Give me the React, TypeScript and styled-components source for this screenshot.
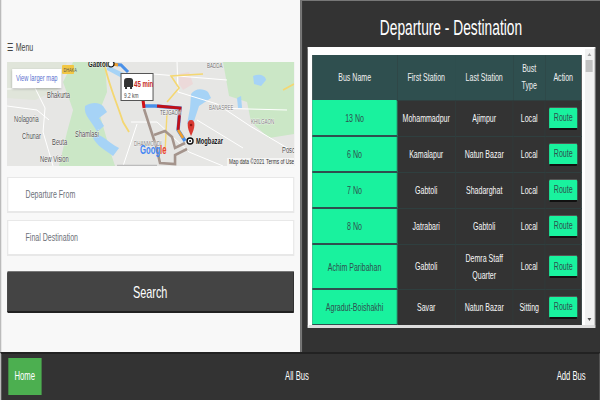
import React from "react";
import styled, { createGlobalStyle } from "styled-components";

/* The reference is a wide page squeezed horizontally, so the page is laid out
   wider and squeezed the same way. w() turns a picture width into a layout width. */
const SQUEEZE = 0.64;
const w = (n: number) => `${n / SQUEEZE}px`;

const Global = createGlobalStyle`
  html, body { margin: 0; padding: 0; width: 600px; height: 400px; overflow: hidden; background: #fff; }
  * { box-sizing: border-box; }
  body { font-family: "Liberation Sans", Arial, sans-serif; }
`;

const Page = styled.div`
  width: ${w(600)}; height: 400px; display: flex; flex-direction: column;
  transform: scaleX(${SQUEEZE}); transform-origin: 0 0;
`;
const Top = styled.div`
  height: 352px; display: flex;
`;
const Left = styled.section`
  width: ${w(300)}; background: #f8f8f8; border-left: 2px solid #bbb; padding: 41px ${w(6)} 0 ${w(6)};
  display: flex; flex-direction: column;
`;
const MenuLine = styled.div`
  font-size: 11px; line-height: 12px; color: #444; height: 21px;
`;
const MapBox = styled.div`
  position: relative; width: ${w(287)}; height: 104px; overflow: hidden; background: #e8e8e8;
`;
const MapSvg = styled.svg`
  display: block; width: 100%; height: 104px; font-family: "Liberation Sans", sans-serif;
`;
const LargerLink = styled.div`
  position: absolute; left: ${w(5)}; top: 7px; width: ${w(49)}; height: 19px; background: #fff;
  box-shadow: 0 1px 3px rgba(0,0,0,.25); color: #5a6fd0; font-size: 9px; line-height: 19px; text-align: center;
`;
const Field = styled.div<{ $mt: number }>`
  margin-top: ${(p) => p.$mt}px; width: ${w(287)}; height: 36px; background: #fff; border: 1px solid #e8e8e8;
  border-left-width: 2px; border-right-width: 2px; border-bottom-width: 2px; padding-left: ${w(17)};
  font-size: 11px; line-height: 32px; color: #6c7078;
`;
const SearchButton = styled.button`
  margin-top: 15px; width: ${w(287)}; height: 42px; background: #444; color: #fff; border: 0; border-top: 1px solid #777;
  border-bottom: 2px solid #222; border-right: 2px solid #222; border-radius: 2px; font: inherit; font-size: 17px;
  padding: 2px 0 0;
`;
const Right = styled.section`
  width: ${w(300)}; background: #333; border-top: 1px solid #777; border-left: 3px solid #777;
  padding: 0 ${w(6)} 0 ${w(6)}; display: flex; flex-direction: column;
`;
const Title = styled.h1`
  margin: 0; height: 46px; padding-top: 15px; text-align: center; color: #fff; font-weight: 400; font-size: 21.5px; line-height: 24px;
`;
const Frame = styled.div`
  position: relative; width: ${w(287)}; height: 281px; background: #fff; border: 2px solid #fff; border-bottom: 3px solid #ddd;
  border-right: 2px solid #ccc; overflow: hidden; padding: 6px 0 0 ${w(3)};
`;
const Table = styled.table`
  width: ${w(269)}; table-layout: fixed; border-collapse: collapse; background: #333; font-size: 11px;
`;
const Col = styled.col<{ $w: number }>`
  width: ${(p) => w(p.$w)};
`;
const HeadCell = styled.th`
  background: #2f4f4f; color: #f1f1f1; font-weight: 400; height: 45px; line-height: 17px; padding: 0 ${w(4)}; text-align: center;
`;
const Row = styled.tr<{ $h: number }>`
  height: ${(p) => p.$h}px;
`;
const NameCell = styled.td`
  background: #19f29e; color: #2f4f4f; text-align: center; border-bottom: 2px solid #2f4f4f; padding: 0;
`;
const Cell = styled.td`
  color: #f8f8f8; text-align: center; border: 1px solid #2f3f3f; line-height: 17px; padding: 0 2px;
`;
const RouteButton = styled.button`
  width: ${w(28)}; height: 23px; background: #19f29e; color: #2f4f4f; border: 0; border-top: 1px solid #555; border-bottom: 2px solid #111;
  border-radius: 2px; font: inherit; font-size: 11px; padding: 0;
`;
const Scrollbar = styled.div`
  position: absolute; top: 0; right: 0; width: ${w(9)}; bottom: 0; background: #f1f1f1;
  display: flex; flex-direction: column; align-items: center; justify-content: space-between; padding: 4px 0;
`;
const Thumb = styled.div`
  position: absolute; left: ${w(1)}; top: 11px; width: ${w(7)}; height: 12px; background: #c1c1c1;
`;
const Arrow = styled.div<{ $up?: boolean }>`
  width: 0; height: 0; border-left: 3px solid transparent; border-right: 3px solid transparent;
  ${(p) => (p.$up ? "border-bottom: 3px solid #a3a3a3;" : "border-top: 3px solid #505050;")}
`;
const Nav = styled.nav`
  height: 48px; background: #333; border-top: 2px solid #222; border-left: 2px solid #bbb; border-right: 2px solid #555;
  display: grid; grid-template-columns: 1fr 1fr 1fr; align-items: center; padding: 0 ${w(13)} 2px ${w(7)};
  color: #fff; font-size: 12px;
`;
const HomeLink = styled.a`
  width: ${w(33)}; height: 37px; background: #4caf50; color: #fff; display: flex; align-items: center; justify-content: center;
`;
const AllBus = styled.a`
  text-align: center; color: #fff;
`;
const AddBus = styled.a`
  text-align: right; color: #fff;
`;

const rows = [
  { n: "13 No", a: "Mohammadpur", b: "Ajimpur", t: "Local", h: 36 },
  { n: "6 No", a: "Kamalapur", b: "Natun Bazar", t: "Local", h: 36 },
  { n: "7 No", a: "Gabtoli", b: "Shadarghat", t: "Local", h: 36 },
  { n: "8 No", a: "Jatrabari", b: "Gabtoli", t: "Local", h: 36 },
  { n: "Achim Paribahan", a: "Gabtoli", b: "Demra Staff Quarter", t: "Local", h: 45 },
  { n: "Agradut-Boishakhi", a: "Savar", b: "Natun Bazar", t: "Sitting", h: 36 },
];

/* The svg is stretched to the layout width, so its geometry comes out right after
   the page squeeze; its text is squeezed here so it narrows like the page text. */
type LabelProps = { x: number; y: number; children: React.ReactNode; size?: number; color?: string; weight?: number; halo?: boolean };
const Label = ({ x, y, children, size = 9, color = "#4a4a4a", weight = 400, halo = true }: LabelProps) => (
  <text
    transform={`translate(${x} ${y}) scale(${SQUEEZE} 1)`}
    fontSize={size}
    fill={color}
    fontWeight={weight}
    stroke={halo ? "#fff" : "none"}
    strokeWidth={halo ? 0.7 : 0}
    paintOrder="stroke"
  >
    {children}
  </text>
);

const MapDrawing = () => (
  <MapSvg viewBox="0 0 287 104" preserveAspectRatio="none">
    <rect width="287" height="104" fill="#e6e6e4" />
    <path d="M0 0H60L50 28L28 38L0 36Z" fill="#e0e5da" />
    <path d="M56 20 L66 0 L98 0 L100 30 L92 50 L104 92 L108 104 L52 104 L60 70 L66 48Z" fill="#cbe7c6" />
    <path d="M216 0 H287 V72 L262 76 L244 60 L240 40 L222 34Z" fill="#cbe7c6" />
    <path d="M78 44 C84 40 92 40 96 44 L100 50 L92 56 L97 64 L90 70 C86 60 76 54 78 44Z" fill="#a6d3f6" />
    <path d="M88 72 C98 74 100 80 112 86 L106 94 C98 88 90 84 86 76Z" fill="#a6d3f6" />
    <path d="M99 2 C104 6 115 10 128 16 L126 22 L100 8Z" fill="#a6d3f6" />
    <path d="M184 32 C188 26 196 26 201 30 L204 36 L192 44 L186 62 L180 62 L183 46Z" fill="#a6d3f6" />
    <path d="M246 14 C250 12 258 12 259 18 L254 24 L247 22Z" fill="#a6d3f6" />
    <path d="M230 36 L234 34 L235 46 L231 46Z" fill="#a6d3f6" />
    <path d="M172 12 L182 10 L186 22 L176 28 L172 22Z" fill="#ecd9d9" />
    <g fill="none" stroke="#fff" strokeWidth="1">
      <path d="M0 27 L28 26 L38 46 L36 70 L46 104" />
      <path d="M0 44 L30 48 L42 58" />
      <path d="M170 0 L171 30 L210 42 L243 64 L287 90" />
      <path d="M124 60 L150 60 L182 90 L216 104" />
      <path d="M204 46 L280 48" />
      <path d="M190 58 L236 86" />
      <path d="M130 62 L116 104" />
      <path d="M146 12 L220 18" />
    </g>
    <path d="M97 0 C100 18 108 36 116 60 L122 70" fill="none" stroke="#f4d772" strokeWidth="1.8" />
    <path d="M160 40 L172 26 L164 14 L196 12" fill="none" stroke="#f4d772" strokeWidth="1.6" />
    <path d="M160 50 L158 90" fill="none" stroke="#f4d772" strokeWidth="1.4" />
    <path d="M287 22 L276 28" stroke="#f4d772" strokeWidth="1.8" />
    <rect x="55" y="3" width="12" height="9" rx="1" fill="#f2c744" />
    <Label x={56.5} y={9.5} size={6} color="#555" halo={false}>DHAKA</Label>
    <g fill="none" strokeWidth="2.6" stroke="#a4948c">
      <path d="M137 47 L149 84 L153 101 L168 102 L168 93 L180 87" />
      <path d="M147 73 L158 69 L165 75 L168 86 L178 81" />
      <path d="M110 104 H150" stroke="#bcbcbc" />
    </g>
    <path d="M105 2 L114 3 L121 10" fill="none" stroke="#4a90e8" strokeWidth="3" />
    <path d="M105 2 L111 3" fill="none" stroke="#f0a030" strokeWidth="3" />
    <path d="M137 44 L148 44 L173 46 L171 68 L178 79" fill="none" stroke="#4a8fe8" strokeWidth="3.4" />
    <path d="M150 44 L173 46 L171 68" fill="none" stroke="#c01018" strokeWidth="2.8" />
    <path d="M171 68 L176 76" fill="none" stroke="#f0a030" strokeWidth="2.6" />
    <path d="M136 38 L137 46" fill="none" stroke="#d01018" strokeWidth="3" />
    <circle cx="104" cy="2" r="3" fill="#fff" stroke="#111" strokeWidth="1.2" />
    <Label x={81} y={5} size={9.5} color="#222" weight={700}>Gabtoli</Label>
    <rect x="114" y="11.5" width="32" height="27" fill="#fff" stroke="#555" strokeWidth="1" />
    <path d="M117 19 Q117 16 120 16 H123 Q126 16 126 19 V25 H117Z M118 25 V27 H120 V25 M123 25 V27 H125 V25" fill="#333" />
    <Label x={127} y={25} size={9.5} color="#c5291c" weight={700} halo={false}>45 min</Label>
    <Label x={117} y={36} size={7.5} color="#444" halo={false}>9.2 km</Label>
    <path d="M184 58 C179 58 180 66 184 74 C188 66 189 58 184 58Z" fill="#d93a32" />
    <circle cx="184" cy="63" r="1.3" fill="#8c1610" />
    <circle cx="183" cy="79" r="3" fill="#fff" stroke="#111" strokeWidth="1.4" />
    <circle cx="183" cy="79" r="1" fill="#111" />
    <Label x={189} y={82} color="#111" weight={700}>Mogbazar</Label>
    <Label x={40} y={36}>Bhakurta</Label>
    <Label x={7} y={60}>Nolagoria</Label>
    <Label x={15} y={77}>Chunar</Label>
    <Label x={45} y={83}>Beuta</Label>
    <Label x={68} y={75}>Shamlasi</Label>
    <Label x={33} y={100}>New Vision</Label>
    <Label x={127} y={84} size={7} color="#777">DHANMONDI</Label>
    <Label x={153} y={53} size={7} color="#555">TEJGAON</Label>
    <Label x={200} y={6} size={7} color="#666">BADDA</Label>
    <Label x={202} y={48} size={7} color="#777">BANASREE</Label>
    <Label x={244} y={62} size={7} color="#777">KHILGAON</Label>
    <Label x={275} y={91}>Posc</Label>
    <Label x={133} y={92} size={12} weight={700} halo={false}>
      <tspan fill="#4285f4">Goog</tspan><tspan fill="#ea4335">le</tspan>
    </Label>
    <rect x="220" y="96" width="67" height="8" fill="#fff" opacity=".6" />
    <Label x={222} y={102} size={7.5} color="#333" halo={false}>Map data ©2021</Label>
    <Label x={259} y={102} size={7.5} color="#333" halo={false}>Terms of Use</Label>
  </MapSvg>
);

export default function App() {
  return (
    <Page>
      <Global />
      <Top>
        <Left>
          <MenuLine>☰ Menu</MenuLine>
          <MapBox>
            <MapDrawing />
            <LargerLink>View larger map</LargerLink>
          </MapBox>
          <Field $mt={11}>Departure From</Field>
          <Field $mt={7}>Final Destination</Field>
          <SearchButton>Search</SearchButton>
        </Left>
        <Right>
          <Title>Departure - Destination</Title>
          <Frame>
            <Table>
              <colgroup>
                <Col $w={85} /><Col $w={58} /><Col $w={58} /><Col $w={32} /><Col $w={36} />
              </colgroup>
              <thead>
                <tr>
                  <HeadCell>Bus Name</HeadCell>
                  <HeadCell>First Station</HeadCell>
                  <HeadCell>Last Station</HeadCell>
                  <HeadCell>Bust Type</HeadCell>
                  <HeadCell>Action</HeadCell>
                </tr>
              </thead>
              <tbody>
                {rows.map((r) => (
                  <Row key={r.n} $h={r.h}>
                    <NameCell>{r.n}</NameCell>
                    <Cell>{r.a}</Cell>
                    <Cell>{r.b}</Cell>
                    <Cell>{r.t}</Cell>
                    <Cell><RouteButton>Route</RouteButton></Cell>
                  </Row>
                ))}
              </tbody>
            </Table>
            <Scrollbar>
              <Arrow $up />
              <Thumb />
              <Arrow />
            </Scrollbar>
          </Frame>
        </Right>
      </Top>
      <Nav>
        <HomeLink>Home</HomeLink>
        <AllBus>All Bus</AllBus>
        <AddBus>Add Bus</AddBus>
      </Nav>
    </Page>
  );
}
